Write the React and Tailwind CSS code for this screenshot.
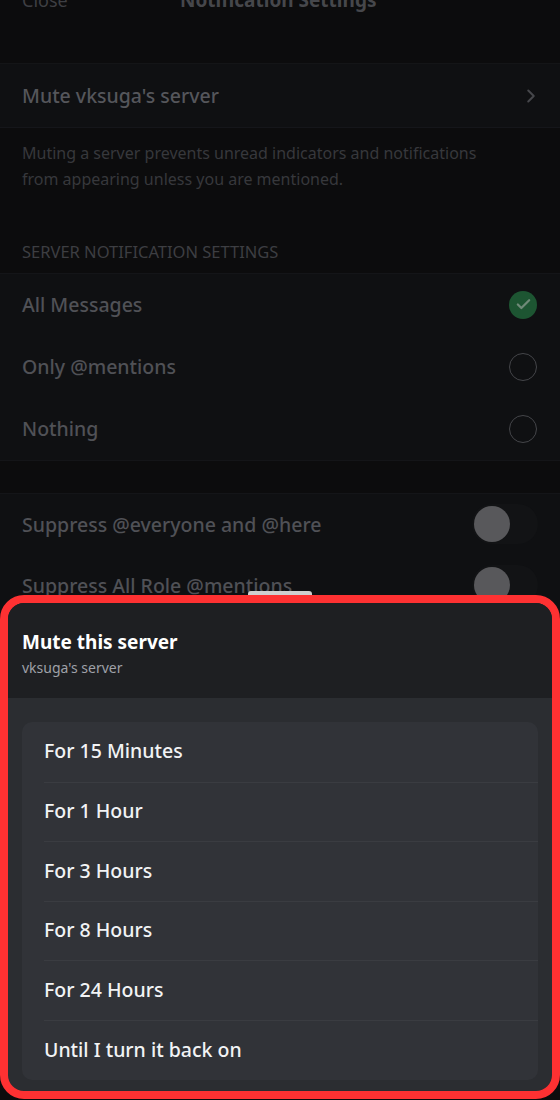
import { ChevronRight, Check } from 'lucide-react'

const font = { fontFamily: '"Noto Sans", "Open Sans", sans-serif' }

const options = ['For 15 Minutes', 'For 1 Hour', 'For 3 Hours', 'For 8 Hours', 'For 24 Hours', 'Until I turn it back on']

function Radio({ checked }) {
  if (checked) {
    return (
      <div className="w-[28px] h-[28px] rounded-full bg-[#1d5532] flex items-center justify-center">
        <Check size={17} strokeWidth={3.2} className="text-[#6f8a78]" />
      </div>
    )
  }
  return <div className="w-[28px] h-[28px] rounded-full border-[1.5px] border-[#444549]" />
}

function Toggle() {
  return (
    <div className="w-[66px] h-[40px] rounded-full bg-[#121315] flex items-center px-[2px]">
      <div className="w-[36px] h-[36px] rounded-full bg-[#58585b]" />
    </div>
  )
}

export default function App() {
  return (
    <div className="relative w-[560px] h-[1100px] overflow-hidden bg-[#0c0c0d]" style={font}>
      {/* Header (scrolled partly off screen) */}
      <div className="h-[126px] -mt-[62px] flex items-center px-[22px] border-b border-[#141517]">
        <span className="text-[18px] text-[#3e3f43] w-[158px]">Close</span>
        <span className="text-[19px] font-bold text-[#46474b]">Notification Settings</span>
      </div>

      <div className="h-[64px] bg-[#0f1012] border-b border-[#15161a] flex items-center justify-between px-[22px]">
        <span className="text-[19.5px] font-medium text-[#55565b]">Mute vksuga's server</span>
        <ChevronRight size={22} strokeWidth={2.2} className="text-[#46474b] -mr-[4px]" />
      </div>

      <p className="px-[22px] pt-[12px] w-[500px] text-[16px] leading-[26px] text-[#37383c]">
        Muting a server prevents unread indicators and notifications from appearing unless you are mentioned.
      </p>

      <p className="px-[22px] mt-[48px] text-[16.5px] text-[#3d3e42] uppercase">Server Notification Settings</p>

      <div className="mt-[8px] bg-[#0f1012] border-y border-[#141518]">
        {[
          ['All Messages', true],
          ['Only @mentions', false],
          ['Nothing', false],
        ].map(([label, checked]) => (
          <div key={label} className="h-[62px] flex items-center justify-between px-[22px] pr-[23px]">
            <span className="text-[19.5px] font-medium text-[#505156]">{label}</span>
            <Radio checked={checked} />
          </div>
        ))}
      </div>

      <div className="mt-[32px] bg-[#0f1012] border-t border-[#141518]">
        {['Suppress @everyone and @here', 'Suppress All Role @mentions'].map((label) => (
          <div key={label} className="h-[61px] flex items-center justify-between px-[22px]">
            <span className="text-[19.5px] font-medium text-[#505156]">{label}</span>
            <Toggle />
          </div>
        ))}
      </div>

      {/* Drag handle */}
      <div className="absolute left-[248px] top-[591px] w-[64px] h-[6px] rounded-t-[3px] bg-[#cfcfcf]" />

      {/* Bottom sheet */}
      <div className="absolute left-0 top-[595px] w-[560px] h-[504px] rounded-[24px] border-[8px] border-[#fe3132] overflow-hidden bg-[#2b2d31] flex flex-col">
        <div className="h-[95px] bg-[#1e1f22] px-[14px] pt-[26px]">
          <h2 className="text-[19px] font-bold text-white leading-[26px]">Mute this server</h2>
          <p className="text-[14px] text-[#9fa1a8] leading-[20px] mt-[3px]">vksuga's server</p>
        </div>
        <div className="px-[14px] pt-[24px]">
          <div className="rounded-[10px] bg-[#313338]">
            {options.map((o, i) => (
              <div key={o} className={`h-[59.6px] flex items-center ml-[22px] ${i > 0 ? 'border-t border-[#3a3c41]' : ''}`}>
                <span className="text-[19.5px] font-medium text-[#f2f3f5] -mt-[2px]">{o}</span>
              </div>
            ))}
          </div>
        </div>
      </div>
    </div>
  )
}
